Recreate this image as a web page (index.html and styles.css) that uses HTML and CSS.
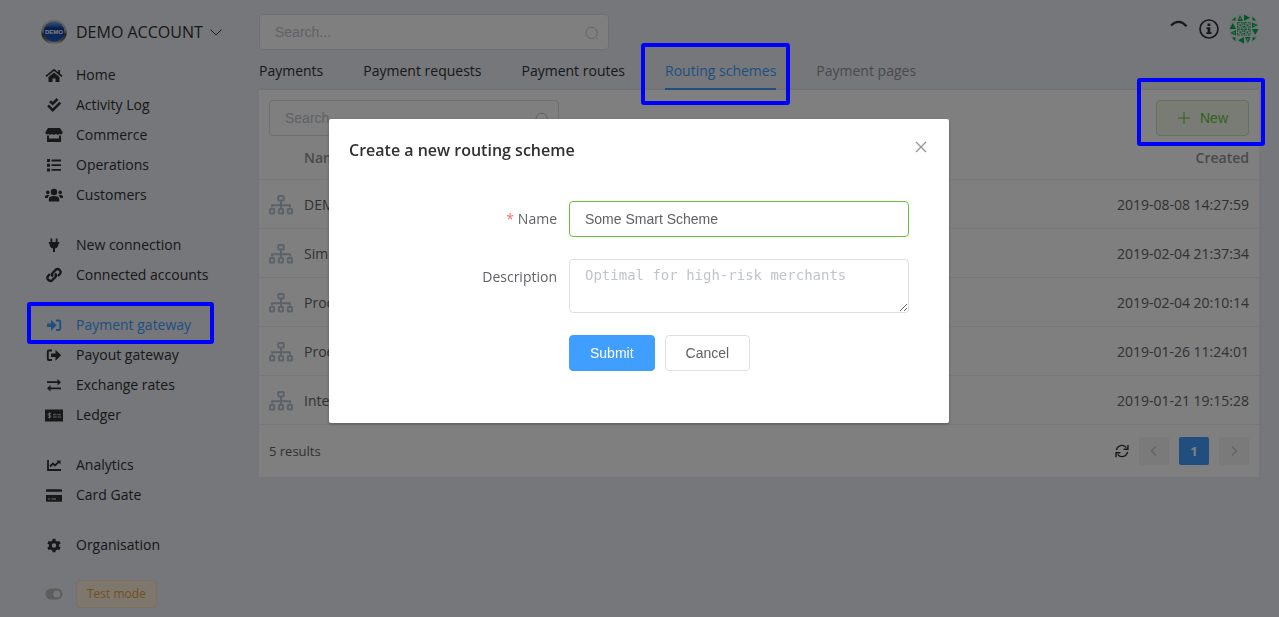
FILE: index.html
```html
<!DOCTYPE html>
<html lang="en">
<head>
<meta charset="utf-8">
<title>Routing schemes</title>
<meta name="viewport" content="width=device-width, initial-scale=1">
<link rel="stylesheet" href="styles.css">
</head>
<body>
<svg class="sprite" aria-hidden="true">
  <symbol id="sitemap" viewBox="0 0 24 20"><g fill="none" stroke="currentColor" stroke-width="2"><rect x="9.300" y="1" width="5.400" height="4.400" rx=".6"/><rect x="1" y="14" width="4.200" height="4.600" rx=".6"/><rect x="9.900" y="14" width="4.200" height="4.600" rx=".6"/><rect x="18.800" y="14" width="4.200" height="4.600" rx=".6"/><path d="M12 5.400v8.600M3.100 12.600v-2.400h17.800v2.400"/></g></symbol>
  <symbol id="search" viewBox="0 0 14 14"><path d="M10.600 10.800A5.600 5.600 0 1 0 9.600 11.600M10.600 10.800l2.200 2" fill="none" stroke="currentColor"/></symbol>
</svg>
<div class="app">
  <aside class="sidebar">
    <button class="account" type="button">
      <svg class="account-logo" viewBox="0 0 28 28"><defs><linearGradient id="rim" x2="0" y2="1"><stop stop-color="#ddd"/><stop offset=".45" stop-color="#aaa"/><stop offset=".6" stop-color="#444"/><stop offset=".8" stop-color="#777"/><stop offset="1" stop-color="#eee"/></linearGradient><linearGradient id="ball" x2="0" y2="1"><stop stop-color="#7db0ee"/><stop offset=".35" stop-color="#0c3f9d"/><stop offset="1" stop-color="#1a5cc8"/></linearGradient></defs><circle cx="14" cy="14" r="14" fill="#f4f4f4"/><circle cx="14" cy="14" r="12.800" fill="url(#rim)"/><circle cx="14" cy="13.500" r="10.200" fill="url(#ball)"/><text x="14" y="16" text-anchor="middle" class="logo-text">DEMO</text></svg>
      <span>DEMO ACCOUNT</span>
      <svg class="caret" viewBox="0 0 14 14"><path d="M1.500 4.500l5.500 5.500 5.500-5.500" fill="none" stroke="currentColor"/></svg>
    </button>
    <nav class="menu">
      <div class="menu-group">
        <a class="menu-item" href="#"><svg viewBox="0 0 18 16"><path d="M1 9.400L9 2.800l8 6.600M14.200 3v4" fill="none" stroke="currentColor" stroke-width="1.800"/><path d="M3.500 10L9 5.500l5.500 4.500V15h-4v-3.600h-3V15h-4z"/></svg>Home</a>
        <a class="menu-item" href="#"><svg viewBox="0 0 18 16"><path d="M5 4.200l2.700 2.500L12.500 2M3 8.400l4.700 4.700L15.300 5.600" fill="none" stroke="currentColor" stroke-width="2.600"/></svg>Activity Log</a>
        <a class="menu-item" href="#"><svg viewBox="0 0 18 16"><path d="M3 1h12l2.500 4c.5 2-1.500 3-2.800 2-1 1-2.800 1-3.800 0-1 1-2.800 1-3.800 0-1 1-2.800 1-3.800 0C2 8 0 7 .5 5zM2 8.500h2v3h10v-3h2V15H2z"/></svg>Commerce</a>
        <a class="menu-item" href="#"><svg viewBox="0 0 18 16"><path d="M2 2h3v3H2zm0 4.700h3v3H2zm0 4.700h3v3H2zM6.500 2.600H16v1.800H6.500zm0 4.700H16v1.800H6.500zm0 4.700H16v1.800H6.500z"/></svg>Operations</a>
        <a class="menu-item" href="#"><svg viewBox="0 0 18 16"><circle cx="9" cy="5" r="3.200"/><circle cx="2.800" cy="5.400" r="1.800"/><circle cx="15.200" cy="5.400" r="1.800"/><path d="M3.800 14.500v-2.200C3.800 10 5.500 9 9 9s5.200 1 5.200 3.300v2.200zM0 11V9.500C0 8 2.500 7.500 4.700 8.300 3.500 9 3 10 2.900 11zm18 0V9.500c0-1.500-2.500-2-4.700-1.200 1.200.7 1.700 1.700 1.800 2.700z"/></svg>Customers</a>
      </div>
      <div class="menu-group">
        <a class="menu-item" href="#"><svg viewBox="0 0 18 16"><path d="M5.500 1.500h1.800v3.500h3.400V1.500h1.800v3.500h1.700v1.800h-.7c0 2.800-1.300 4.300-3.500 4.800V15H8v-3.400C5.800 11.100 4.500 9.600 4.500 6.800h-.7V5h1.700z"/></svg>New connection</a>
        <a class="menu-item" href="#"><svg viewBox="0 0 18 16"><g fill="none" stroke="currentColor" stroke-width="2.400"><path d="M8 9.700a3 3 0 0 1 0-4.200L10.700 2.800a3 3 0 0 1 4.200 4.200L13 9"/><path d="M10 6.300a3 3 0 0 1 0 4.200l-2.700 2.700A3 3 0 0 1 3.100 9L5 7"/></g></svg>Connected accounts</a>
      </div>
      <div class="menu-group">
        <a class="menu-item is-active" href="#"><svg viewBox="0 0 18 16"><path d="M2 6.400h4V2.700L11.700 8.200 6 13.700V10H2z"/><path d="M11 3.500h3.200c.6 0 1 .4 1 1v7.500c0 .6-.4 1-1 1H11" fill="none" stroke="currentColor" stroke-width="1.900"/></svg>Payment gateway<span class="mark mark-menu"></span></a>
        <a class="menu-item" href="#"><svg viewBox="0 0 18 16"><path d="M6 6.400h4.500V2.700L16.200 8.200l-5.700 5.500V10H6z"/><path d="M7 3.500H3.800c-.6 0-1 .4-1 1v7.500c0 .6.4 1 1 1H7" fill="none" stroke="currentColor" stroke-width="1.900"/></svg>Payout gateway</a>
        <a class="menu-item" href="#"><svg viewBox="0 0 18 16"><path d="M2 4.300h10.500V2L16 5.200l-3.500 3.200V6.100H2zM16 10.400H5.500V8.100L2 11.300l3.500 3.200v-2.300H16z"/></svg>Exchange rates</a>
        <a class="menu-item" href="#"><svg viewBox="0 0 18 16"><path d="M0 2.500h18v12H0z"/><path d="M8 7.700h3.500m1 0H16M8 10h3.500m1 0H16M6 6.500H3.800c-1 0-1 1.900 0 1.900h1.200c1 0 1 1.900 0 1.900H3M4.500 5.500v6" fill="none" stroke="#ebeef5" stroke-width=".8"/></svg>Ledger</a>
      </div>
      <div class="menu-group">
        <a class="menu-item" href="#"><svg viewBox="0 0 18 16"><path d="M3 3v10h13" fill="none" stroke="currentColor" stroke-width="1.800"/><path d="M5 9.500L8 6.500l2 2 3.700-3.700" fill="none" stroke="currentColor" stroke-width="1.800"/><path d="M11.500 3.500h4v4z"/></svg>Analytics</a>
        <a class="menu-item" href="#"><svg viewBox="0 0 18 16"><path d="M1.500 2.200h15l.5 1v1.500H1v-1.500zM1 8h16v6l-.5.700h-15L1 14z"/><path d="M3 12h2m1.500 0H11" stroke="#ebeef5"/></svg>Card Gate</a>
      </div>
      <div class="menu-group">
        <a class="menu-item" href="#"><svg viewBox="0 0 18 16"><path d="M9 3.300a5.200 5.200 0 1 0 0 10.400 5.200 5.200 0 0 0 0-10.400m0 3a2.200 2.200 0 1 1 0 4.400 2.200 2.200 0 0 1 0-4.400" fill-rule="evenodd"/><path d="M9 1.700v2.800M9 12.500v2.800M3.100 5.100l2.500 1.500M12.400 10.400l2.500 1.500M3.100 11.900l2.500-1.500M12.400 6.600l2.500-1.500" stroke="currentColor" stroke-width="3"/></svg>Organisation</a>
      </div>
    </nav>
    <div class="mode">
      <svg viewBox="0 0 18 16"><path d="M6 2.500h6a5.500 5.500 0 0 1 0 11H6a5.500 5.500 0 0 1 0-11m5.800 2a3.500 3.500 0 1 0 0 7 3.500 3.500 0 0 0 0-7" fill-rule="evenodd"/></svg>
      <span class="mode-tag">Test mode</span>
    </div>
  </aside>
  <main class="main">
    <header class="topbar">
      <label class="search search-top"><input type="search" placeholder="Search..." aria-label="Search"><svg><use href="#search"/></svg></label>
      <div class="tools">
        <svg class="spinner" viewBox="0 0 20 20"><path d="M2 6.500Q10-1 17.500 7.200" fill="none" stroke="currentColor" stroke-width="2.200"/></svg>
        <svg class="info" viewBox="0 0 20 20"><circle cx="10" cy="10" r="9" fill="none" stroke="currentColor" stroke-width="1.700"/><path d="M8.500 4.500h2.800v2.500H8.500zM7.500 8.300h3.800v5h1.300V15H7.300v-1.700h1.300V10H7.500z"/></svg>
        <svg class="avatar" viewBox="0 0 30 30"><defs><clipPath id="round"><circle cx="15" cy="15" r="15"/></clipPath>
          <g id="quad"><path d="M8 8h3l-1.500 2.500zM8 8v3l2.500-1.500zM14.500 8v3L12 9.500zM8 14.500h3L9.500 12zM14.500 14.500h-3l1.500-2.500zM14.500 8h-3L13 10.500zM14.500 14.500v-3L12 13zM8 14.500v-3l2.500 1.500z"/><path d="M10.500 10.500h1.800v1.800h-1.800z"/></g>
          <g id="edge"><path d="M8.500 7l2.500-6 3 6zM10.400 5.500h1.700L11.200 3.500zM15 .5l6 3.300-6 3.300zM2 6.500L6.500 2.500v4z" fill-rule="evenodd"/></g></defs>
          <g clip-path="url(#round)"><rect width="30" height="30" fill="#e6e6e6"/><g fill="#00b25a"><use href="#quad"/><use href="#quad" x="7"/><use href="#quad" y="7"/><use href="#quad" x="7" y="7"/><use href="#edge"/><use href="#edge" transform="rotate(90 15 15)"/><use href="#edge" transform="rotate(180 15 15)"/><use href="#edge" transform="rotate(270 15 15)"/></g></g></svg>
      </div>
    </header>
    <nav class="tabs">
      <a class="tab" href="#">Payments</a>
      <a class="tab" href="#">Payment requests</a>
      <a class="tab" href="#">Payment routes</a>
      <a class="tab is-active" href="#">Routing schemes<span class="mark mark-tab"></span></a>
      <a class="tab is-disabled" href="#">Payment pages</a>
    </nav>
    <section class="panel">
      <div class="panel-head">
        <label class="search search-list"><input type="search" placeholder="Search..." aria-label="Search schemes"><svg><use href="#search"/></svg></label>
        <div class="new-wrap"><button class="btn btn-new" type="button"><svg viewBox="0 0 14 14"><path d="M7 1v12M1 7h12" stroke="currentColor" fill="none"/></svg>New</button><span class="mark mark-new"></span></div>
      </div>
      <table class="list">
        <thead><tr><th class="icon-col"></th><th>Name</th><th class="date">Created</th></tr></thead>
        <tbody>
          <tr><td class="icon-col"><svg><use href="#sitemap"/></svg></td><td>DEMO scheme</td><td class="date">2019-08-08 14:27:59</td></tr>
          <tr><td class="icon-col"><svg><use href="#sitemap"/></svg></td><td>Simple</td><td class="date">2019-02-04 21:37:34</td></tr>
          <tr><td class="icon-col"><svg><use href="#sitemap"/></svg></td><td>Processing</td><td class="date">2019-02-04 20:10:14</td></tr>
          <tr><td class="icon-col"><svg><use href="#sitemap"/></svg></td><td>Processing</td><td class="date">2019-01-26 11:24:01</td></tr>
          <tr><td class="icon-col"><svg><use href="#sitemap"/></svg></td><td>Internal</td><td class="date">2019-01-21 19:15:28</td></tr>
        </tbody>
      </table>
      <footer class="panel-foot">
        <span>5 results</span>
        <div class="pager">
          <button class="refresh" type="button" aria-label="Refresh"><svg viewBox="0 0 16 16"><path d="M1.700 7A6.300 6.300 0 0 1 13 4.200M14.300 9A6.300 6.300 0 0 1 3 11.800M14.800 1v5h-5M1.200 15v-5h5" fill="none" stroke="currentColor" stroke-width="1.600"/></svg></button>
          <button class="page" type="button" aria-label="Previous" disabled><svg viewBox="0 0 12 12"><path d="M8 1.500L3.500 6 8 10.500" fill="none" stroke="currentColor" stroke-width="1.200"/></svg></button>
          <button class="page is-current" type="button">1</button>
          <button class="page" type="button" aria-label="Next" disabled><svg viewBox="0 0 12 12"><path d="M4 1.500L8.500 6 4 10.500" fill="none" stroke="currentColor" stroke-width="1.200"/></svg></button>
        </div>
      </footer>
    </section>
  </main>
</div>
<div class="overlay">
  <div class="dialog" role="dialog" aria-labelledby="dialog-title">
    <header class="dialog-head">
      <h1 id="dialog-title">Create a new routing scheme</h1>
      <button class="close" type="button" aria-label="Close"><svg viewBox="0 0 12 12"><path d="M1 1l10 10M11 1L1 11" fill="none" stroke="currentColor" stroke-width="1.200"/></svg></button>
    </header>
    <form class="form">
      <label class="form-label is-required" for="name">Name</label>
      <input class="field is-valid" id="name" type="text" value="Some Smart Scheme">
      <label class="form-label" for="description">Description</label>
      <textarea class="field" id="description" rows="2" placeholder="Optimal for high-risk merchants"></textarea>
      <div class="actions">
        <button class="btn btn-primary" type="button">Submit</button>
        <button class="btn" type="button">Cancel</button>
      </div>
    </form>
  </div>
</div>
</body>
</html>
```
FILE: styles.css
```css
* { box-sizing: border-box; }
body {
  margin: 0;
  background: #ebeef5;
  color: #303133;
  font: 14px/20px "Open Sans", "Noto Sans", sans-serif;
}
a { color: inherit; text-decoration: none; }
button, input { font-family: "Liberation Sans", Arial, sans-serif; font-size: 14px; }
svg { display: block; fill: currentColor; flex: none; }
.sprite { position: absolute; width: 0; height: 0; }
.app { display: flex; min-height: 100vh; }

.sidebar { width: 259px; flex: none; padding: 14px 16px 0 40px; }
.account {
  display: flex; align-items: center; height: 36px; padding: 0; border: 0;
  background: none; color: inherit; font-family: "Open Sans", sans-serif; font-size: 16px;
}
.account-logo { width: 28px; height: 28px; margin-right: 8px; }
.logo-text { font: bold 6px "Liberation Sans", sans-serif; fill: #fff; }
.caret { width: 14px; height: 14px; margin-left: 6px; }
.menu { padding-top: 10px; }
.menu-group { margin-bottom: 20px; }
.menu-item { position: relative; display: flex; align-items: center; height: 30px; padding-left: 5px; }
.menu-item svg, .mode svg { width: 18px; height: 16px; margin-right: 13px; }
.menu-item.is-active { color: #409eff; }
.mode { display: flex; align-items: center; padding-left: 5px; }
.mode svg { color: #bbb; }
.mode-tag {
  height: 28px; padding: 0 10px; border: 1px solid #f8e0c0; border-radius: 4px;
  background: #fbeedd; color: #e6a23c; font-size: 12px; line-height: 26px;
}

.main { flex: 1; min-width: 0; padding: 14px 20px 20px 0; }
.topbar { display: flex; justify-content: space-between; }
.tools { display: flex; align-items: center; gap: 10px; height: 30px; }
.spinner, .info { width: 20px; height: 20px; }
.avatar { width: 30px; height: 30px; }
.search { position: relative; display: block; color: #c0c4cc; }
.search input {
  width: 100%; height: 36px; padding: 0 30px 0 15px; border: 1px solid #dcdfe6;
  border-radius: 4px; background: #fff; outline: 0; appearance: none;
}
.search svg { position: absolute; right: 10px; top: 12px; width: 14px; height: 14px; }
.search-top { width: 350px; }
.search-list { width: 290px; }
::placeholder { color: #c0c4cc; opacity: 1; }

.tabs { display: flex; gap: 40px; height: 40px; border-bottom: 2px solid #e4e7ed; }
.tab { position: relative; height: 40px; line-height: 42px; }
.tab.is-active { color: #409eff; border-bottom: 2px solid #409eff; }
.tab.is-disabled { color: #909399; }

.panel { background: #fff; }
.panel-head { display: flex; justify-content: space-between; padding: 10px 10px 0; }
.new-wrap { position: relative; }
.btn {
  height: 36px; padding: 0 20px; border: 1px solid #dcdfe6; border-radius: 4px;
  background: #fff; color: #606266;
}
.btn-new {
  display: flex; align-items: center; gap: 9px; border-color: #c2e7b0;
  background: #f0f9eb; color: #67c23a;
}
.btn-new svg { width: 14px; height: 14px; }
.btn-primary { border-color: #409eff; background: #409eff; color: #fff; }

.list { width: 100%; border-collapse: collapse; color: #606266; }
.list th, .list td { border-bottom: 1px solid #ebeef5; padding: 2px 10px 0; text-align: left; }
.list th { height: 43px; color: #909399; font-weight: 600; }
.list td { height: 49px; }
.list .icon-col { width: 35px; padding-right: 0; color: #b8c4d4; }
.list .icon-col svg { width: 24px; height: 20px; }
.list .date { text-align: right; }
.panel-foot {
  display: flex; align-items: center; justify-content: space-between;
  height: 52px; padding: 0 10px; color: #606266; font-size: 13px;
}
.pager { display: flex; align-items: center; gap: 10px; }
.refresh { padding: 0; border: 0; background: none; color: #303133; }
.refresh svg { width: 14px; height: 14px; }
.page {
  display: grid; place-items: center; width: 30px; height: 28px; padding: 0;
  border: 0; border-radius: 2px; background: #f4f4f5; color: #c0c4cc;
}
.page svg { width: 12px; height: 12px; }
.page.is-current { background: #409eff; color: #fff; font: bold 13px "Open Sans", sans-serif; }

/* highlight frames stay above the overlay */
.mark { position: absolute; z-index: 20; border: 4px solid #00f; border-radius: 3px; pointer-events: none; }
.mark-menu { inset: -8px 29px -4px -13px; }
.mark-tab { inset: -7px -14px -17px -24px; }
.mark-new { inset: -22px -16px -10px -19px; }

.overlay { position: fixed; inset: 0; z-index: 10; padding-right: 1px; background: rgba(0, 0, 0, .5); }
.dialog {
  width: 620px; max-width: 100%; margin: 119px auto 0; border-radius: 2px;
  background: #fff; box-shadow: 0 1px 3px rgba(0, 0, 0, .3);
}
.dialog-head { display: flex; justify-content: space-between; padding: 20px 20px 10px; }
.dialog-head h1 { margin: 0; font-size: 16px; line-height: 22px; font-weight: 600; }
.close { width: 16px; height: 16px; padding: 2px; border: 0; background: none; color: #909399; }
.close svg { width: 12px; height: 12px; }
.form {
  display: grid; grid-template-columns: 208px 1fr; column-gap: 12px; row-gap: 22px;
  padding: 30px 40px 52px 20px;
}
.form-label { color: #606266; line-height: 36px; text-align: right; }
.is-required::before { content: "*"; margin-right: 4px; color: #f56c6c; }
.field {
  width: 100%; height: 36px; padding: 0 15px; border: 1px solid #dcdfe6;
  border-radius: 4px; color: #606266; outline: 0;
}
.field.is-valid { border-color: #67c23a; }
textarea.field {
  display: block; height: 54px; padding: 5px 15px; resize: vertical;
  font: 14px/21px "DejaVu Sans Mono", monospace;
}
.actions { grid-column: 2; display: flex; gap: 10px; }
```
